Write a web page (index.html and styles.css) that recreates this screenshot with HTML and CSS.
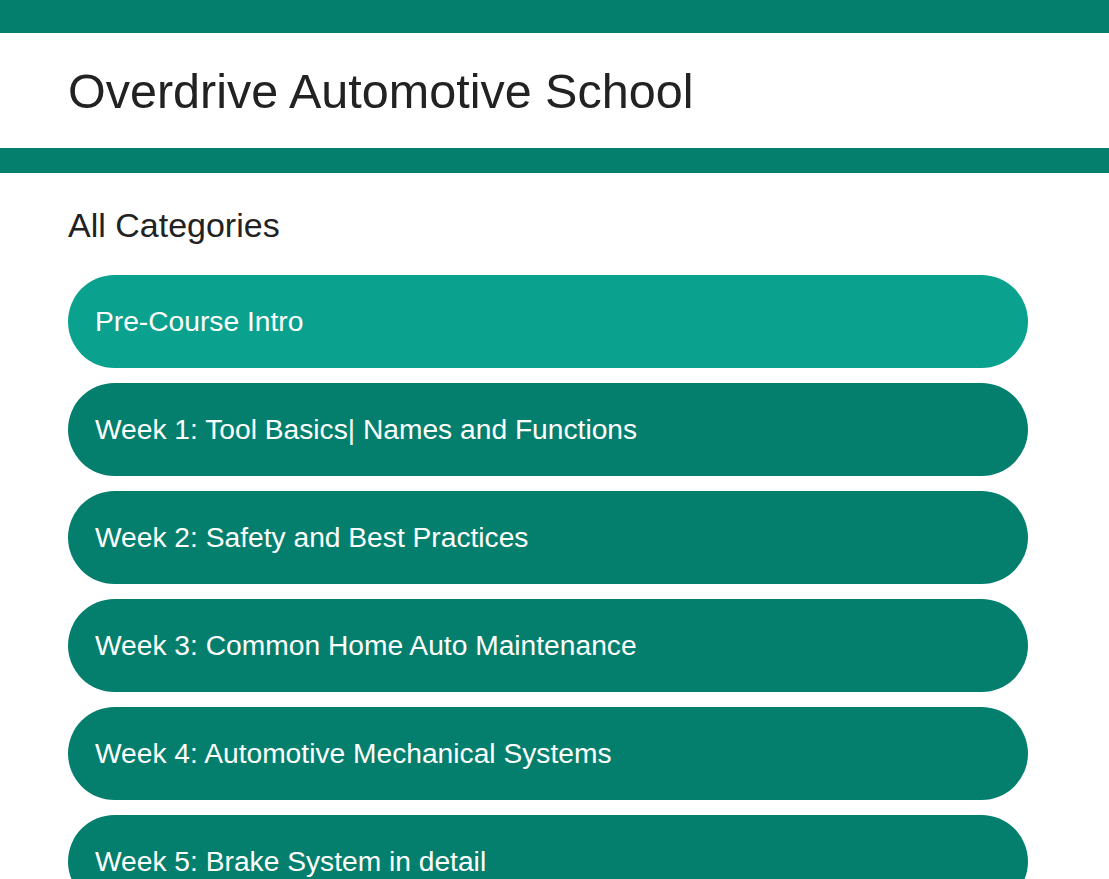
FILE: index.html
```html
<!DOCTYPE html>
<html>
<head>
<meta charset="utf-8">
<link rel="stylesheet" href="styles.css">
</head>
<body>
<div class="topbar"></div>
<header class="header">
  <h1 class="title">Overdrive Automotive School</h1>
</header>
<div class="bottombar"></div>
<main class="content">
  <h2 class="heading">All Categories</h2>
  <ul class="list">
    <li class="pill pill-active">Pre-Course Intro</li>
    <li class="pill">Week 1: Tool Basics| Names and Functions</li>
    <li class="pill">Week 2: Safety and Best Practices</li>
    <li class="pill">Week 3: Common Home Auto Maintenance</li>
    <li class="pill">Week 4: Automotive Mechanical Systems</li>
    <li class="pill">Week 5: Brake System in detail</li>
  </ul>
</main>
</body>
</html>
```
FILE: styles.css
```css
html, body {
  margin: 0;
  padding: 0;
  background: #fff;
  font-family: "Liberation Sans", Arial, sans-serif;
  color: #222;
}
.topbar {
  height: 33px;
  background: #047f6d;
}
.header {
  height: 115px;
  display: flex;
  align-items: center;
  padding-left: 68px;
}
.title {
  margin: 0;
  font-size: 48.5px;
  font-weight: 400;
  color: #222;
}
.bottombar {
  height: 25px;
  background: #047f6d;
}
.content {
  padding: 32px 81px 0 68px;
}
.heading {
  margin: 0 0 30px 0;
  font-size: 34px;
  font-weight: 400;
  line-height: 40px;
  color: #222;
}
.list {
  list-style: none;
  margin: 0;
  padding: 0;
  display: flex;
  flex-direction: column;
  gap: 15px;
}
.pill {
  height: 93px;
  border-radius: 47px;
  background: #047f6d;
  color: #fff;
  display: flex;
  align-items: center;
  padding-left: 27px;
  font-size: 28.2px;
}
.pill-active {
  background: #0aa28f;
}
```
